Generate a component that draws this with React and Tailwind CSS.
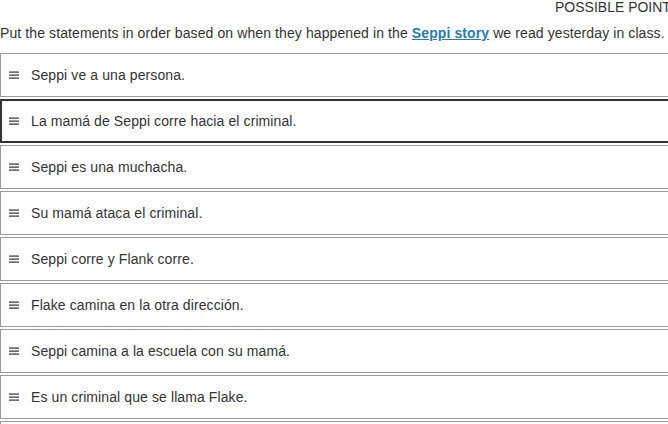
import React from "react";

const items = [
  "Seppi ve a una persona.",
  "La mamá de Seppi corre hacia el criminal.",
  "Seppi es una muchacha.",
  "Su mamá ataca el criminal.",
  "Seppi corre y Flank corre.",
  "Flake camina en la otra dirección.",
  "Seppi camina a la escuela con su mamá.",
  "Es un criminal que se llama Flake.",
  "Seppi es un perro.",
];

function Grip() {
  return (
    <svg width="10" height="8" viewBox="0 0 10 8" className="shrink-0">
      <rect x="0" y="0.5" width="10" height="1.2" fill="#333" />
      <rect x="0" y="3.5" width="10" height="1.2" fill="#333" />
      <rect x="0" y="6.5" width="10" height="1.2" fill="#333" />
    </svg>
  );
}

export default function App() {
  return (
    <div
      className="w-[668px] h-[424px] overflow-hidden bg-white"
      style={{ fontFamily: "'Liberation Sans', Arial, sans-serif" }}
    >
      <div className="w-[690px]">
        <div className="h-[15px] pl-[555px] text-[14px] leading-[15px] text-[#333] whitespace-nowrap">
          POSSIBLE POINTS: 1
        </div>
        <div className="h-[38px] pt-[10px] text-[14px] leading-[16px] text-[#333] whitespace-nowrap tracking-[0.1px]">
          Put the statements in order based on when they happened in the{" "}
          <a className="font-bold text-[#2a7aa8] underline">Seppi story</a> we read yesterday in class.
        </div>
        <div className="flex flex-col gap-[2px]">
          {items.map((t, i) => (
            <div
              key={i}
              className={
                "h-[44px] flex items-center gap-[12px] text-[14px] text-[#333] tracking-[0.1px] " +
                (i === 1 ? "border-2 border-[#333] pl-[7px]" : "border border-[#9a9a9a] pl-[8px]")
              }
            >
              <Grip />
              <span>{t}</span>
            </div>
          ))}
        </div>
      </div>
    </div>
  );
}
